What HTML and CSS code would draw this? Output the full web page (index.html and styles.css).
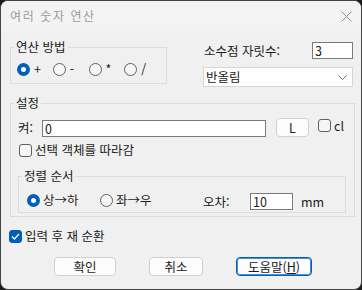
FILE: index.html
```html
<!DOCTYPE html>
<html lang="ko">
<head>
    <meta charset="UTF-8">
    <title>여러 숫자 연산</title>
    <link rel="stylesheet" href="styles.css">
</head>
<body>
    <div class="window">
        <div class="titlebar">
            <span class="title">여러 숫자 연산</span>
            <svg class="close" width="11" height="11" viewBox="0 0 11 11">
                <path d="M0.5 0.5 L10.5 10.5 M10.5 0.5 L0.5 10.5" stroke="#8f8f8f" stroke-width="1" fill="none"/>
            </svg>
        </div>

        <div class="content">
            <div class="top-row">
                <fieldset class="group op-group">
                    <legend>연산 방법</legend>
                    <div class="op-row">
                        <label class="opt"><span class="radio on"></span>+</label>
                        <label class="opt"><span class="radio"></span>-</label>
                        <label class="opt"><span class="radio"></span>*</label>
                        <label class="opt"><span class="radio"></span>/</label>
                    </div>
                </fieldset>

                <div class="precision">
                    <div class="prec-row">
                        <span class="prec-label">소수점 자릿수:</span>
                        <span class="field digits">3</span>
                    </div>
                    <div class="select">
                        <span>반올림</span>
                        <svg width="9" height="5" viewBox="0 0 9 5">
                            <path d="M0.5 0.5 L4.5 4.5 L8.5 0.5" stroke="#6b6b6b" fill="none"/>
                        </svg>
                    </div>
                </div>
            </div>

            <fieldset class="group settings">
                <legend>설정</legend>
                <div class="key-row">
                    <span class="key-label">켜:</span>
                    <span class="field key-field">0</span>
                    <span class="btn small-btn">L</span>
                    <label class="check-opt cl"><span class="check"></span>cl</label>
                </div>
                <label class="check-line follow"><span class="check"></span>선택 객체를 따라감</label>

                <fieldset class="group sort-group">
                    <legend>정렬 순서</legend>
                    <div class="sort-row">
                        <label class="sort-opt first"><span class="radio on"></span>상→하</label>
                        <label class="sort-opt second"><span class="radio"></span>좌→우</label>
                        <span class="tol-label">오차:</span>
                        <span class="field tol-field">10</span>
                        <span class="unit">mm</span>
                    </div>
                </fieldset>
            </fieldset>

            <label class="check-line repeat">
                <span class="check on">
                    <svg width="9" height="7" viewBox="0 0 9 7">
                        <path d="M1 3.5 L3.4 6 L8 1" stroke="#ffffff" stroke-width="1.2" fill="none"/>
                    </svg>
                </span>입력 후 재 순환
            </label>

            <div class="buttons">
                <span class="btn ok-btn">확인</span>
                <span class="btn cancel-btn">취소</span>
                <span class="btn help-btn default">도움말(<u>H</u>)</span>
            </div>
        </div>
    </div>
</body>
</html>
```

FILE: styles.css
```css
* {
    box-sizing: border-box;
}
html, body {
    margin: 0;
}
body {
    background-color: #1c1c1c;
    font-family: "Noto Sans CJK KR", "Noto Sans", sans-serif;
    font-size: 12.5px;
    line-height: 16px;
    color: #1b1b1b;
}
.window {
    width: 362px;
    height: 290px;
    background-color: #f0f0f0;
    border: 1px solid #454545;
    border-radius: 8px;
    overflow: hidden;
}
.titlebar {
    height: 30px;
    background-color: #f3f3f3;
    display: flex;
    align-items: center;
    justify-content: space-between;
    padding: 0 9px 0 9px;
}
.title {
    font-size: 12px;
    letter-spacing: 1.6px;
    color: #9a9a9a;
}
.close {
    margin-right: 0;
}
.content {
    padding: 8px 6px 0 9px;
}

/* group boxes */
.group {
    border: 1px solid #dcdcdc;
    margin: 0;
    min-width: 0;
}
.group legend {
    padding: 0 2px;
    line-height: 16px;
}
.top-row {
    display: flex;
    align-items: flex-start;
}
.op-group {
    width: 157px;
    padding: 6px 6px 6px 6px;
}
.op-group legend {
    margin-left: -3px;
}
.op-row {
    display: flex;
    height: 16px;
}
.opt {
    display: inline-flex;
    align-items: center;
    width: 37px;
    gap: 4px;
}

/* radios and checkboxes */
.radio {
    width: 13px;
    height: 13px;
    border-radius: 50%;
    border: 1px solid #606060;
    background-color: #f6f6f6;
    flex: none;
}
.radio.on {
    border: 4px solid #005fb8;
    background-color: #ffffff;
}
.check {
    width: 13px;
    height: 13px;
    border-radius: 3px;
    border: 1px solid #606060;
    background-color: #f6f6f6;
    flex: none;
    display: flex;
    align-items: center;
    justify-content: center;
}
.check.on {
    border-color: #005fb8;
    background-color: #005fb8;
}

/* precision column */
.precision {
    width: 150px;
    margin: 3px 2px 0 auto;
}
.prec-row {
    display: flex;
    justify-content: space-between;
    align-items: center;
    height: 17px;
}
.prec-label {
    padding-left: 1px;
}
.field {
    display: block;
    height: 17px;
    border: 1px solid #7a7a7a;
    background-color: #ffffff;
    padding-left: 2px;
    line-height: 15px;
}
.digits {
    width: 41px;
}
.select {
    margin-top: 8px;
    height: 20px;
    border: 1px solid #d5d5d5;
    background-color: #ffffff;
    display: flex;
    align-items: center;
    justify-content: space-between;
    padding: 0 5px 0 2px;
}

/* settings */
.settings {
    margin-top: 8px;
    padding: 7px 8px 3px 7px;
}
.settings legend {
    margin-left: -4px;
}
.key-row {
    display: flex;
    align-items: center;
    height: 19px;
}
.key-label {
    width: 24px;
}
.key-field {
    width: 224px;
    align-self: flex-end;
}
.btn {
    display: flex;
    align-items: center;
    justify-content: center;
    background-color: #fdfdfd;
    border: 1px solid #d0d0d0;
    border-radius: 4px;
}
.small-btn {
    width: 33px;
    height: 19px;
    margin-left: 10px;
}
.check-opt {
    display: inline-flex;
    align-items: center;
    gap: 3px;
}
.cl {
    margin-left: 9px;
    align-self: flex-start;
    margin-top: 1px;
    height: 13px;
}
.check-line {
    display: flex;
    align-items: center;
    gap: 3px;
    height: 16px;
}
.follow {
    margin-top: 5px;
    margin-left: 1px;
}
.sort-group {
    margin-top: 10px;
    padding: 9px 8px 2px 8px;
}
.sort-group legend {
    margin-left: -5px;
}
.sort-row {
    display: flex;
    align-items: flex-start;
    height: 17px;
}
.sort-opt {
    display: inline-flex;
    align-items: center;
    gap: 3px;
    height: 14px;
    line-height: 14px;
}
.first {
    width: 73px;
}
.second {
    width: 103px;
}
.tol-label {
    width: 47px;
    line-height: 15px;
    padding-top: 1px;
}
.tol-field {
    width: 43px;
}
.unit {
    margin-left: 8px;
    line-height: 15px;
    padding-top: 1px;
}
.repeat {
    margin-top: 11px;
    margin-left: -1px;
}

/* buttons */
.buttons {
    display: flex;
    gap: 33px;
    margin-top: 13px;
    padding-left: 44px;
}
.buttons .btn {
    height: 19px;
}
.ok-btn {
    width: 62px;
}
.cancel-btn {
    width: 54px;
}
.help-btn {
    width: 76px;
}
.btn.default {
    border: 1px solid #005fb8;
    box-shadow: inset 0 0 0 1px #4a8fd6;
}
```
